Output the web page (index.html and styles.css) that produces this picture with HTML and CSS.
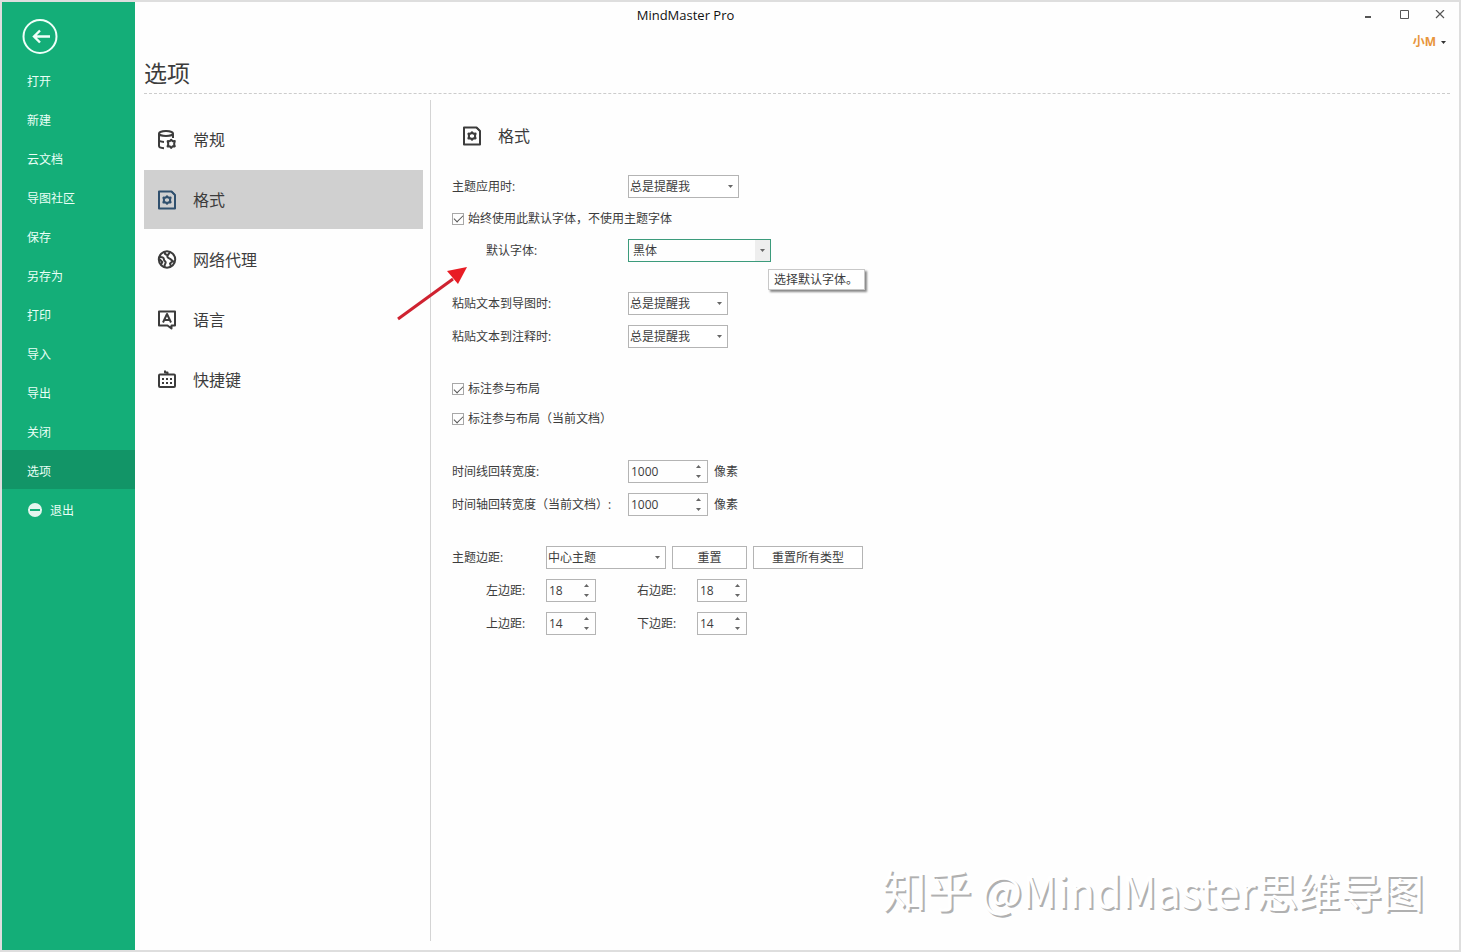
FILE: index.html
```html
<!DOCTYPE html>
<html lang="zh-CN">
<head>
<meta charset="utf-8">
<title>MindMaster Pro</title>
<link rel="stylesheet" href="styles.css">
</head>
<body>
<svg class="defs" aria-hidden="true">
  <symbol id="down" viewBox="0 0 5 3"><path d="M0 0h5L2.500 3z"/></symbol>
  <symbol id="up" viewBox="0 0 5 3"><path d="M0 3h5L2.500 0z"/></symbol>
  <symbol id="format" viewBox="0 0 20 20">
    <path d="M2 1.500h12.500L18 5v13.500H2z" fill="none" stroke="currentColor" stroke-width="2" stroke-linejoin="round"/>
    <path d="M13.500 1.500L18 6V4l-2.500-2.500z" fill="currentColor"/>
    <path d="M10 6.200l1.400 1.500 2.200-.1-.7 2.400.7 2.400-2.200-.1L10 13.800l-1.400-1.500-2.200.1.700-2.400-.7-2.400 2.200.1z" fill="none" stroke="currentColor" stroke-width="2" stroke-linejoin="round"/>
  </symbol>
</svg>
<div class="window">
  <aside class="sidebar">
    <button class="back" aria-label="返回">
      <svg viewBox="0 0 36 36" width="36" height="36"><circle cx="18" cy="17.500" r="16.500" fill="none" stroke="currentColor" stroke-width="2"/><path d="M28 17.500H12M18 11.500l-6 6 6 6" fill="none" stroke="currentColor" stroke-width="2.400"/></svg>
    </button>
    <nav class="menu">
      <a href="#">打开</a>
      <a href="#">新建</a>
      <a href="#">云文档</a>
      <a href="#">导图社区</a>
      <a href="#">保存</a>
      <a href="#">另存为</a>
      <a href="#">打印</a>
      <a href="#">导入</a>
      <a href="#">导出</a>
      <a href="#">关闭</a>
      <a href="#" class="current">选项</a>
      <a href="#"><svg viewBox="0 0 16 16" width="16" height="16"><circle cx="8" cy="7" r="7" fill="#e4f5ee"/><path d="M3 7h10" stroke="#14ae78" stroke-width="2"/></svg>退出</a>
    </nav>
  </aside>
  <main class="main">
    <header class="titlebar">
      <span class="app-title">MindMaster Pro</span>
      <div class="controls">
        <button aria-label="最小化"><svg viewBox="0 0 10 10" width="10" height="10"><path d="M2 7h6" stroke="#555" stroke-width="2"/></svg></button>
        <button aria-label="最大化"><svg viewBox="0 0 10 10" width="10" height="10"><path d="M1.500 .5h8v8h-8z" fill="none" stroke="#555"/></svg></button>
        <button aria-label="关闭"><svg viewBox="0 0 10 10" width="10" height="10"><path d="M1 0l8 8M9 0L1 8" stroke="#555" stroke-width="1.200"/></svg></button>
      </div>
    </header>
    <div class="account"><button>小M<svg class="tri" aria-hidden="true"><use href="#down"/></svg></button></div>
    <h1>选项</h1>
    <div class="content">
      <nav class="tabs">
        <a href="#"><svg viewBox="0 0 20 20"><g fill="none" stroke="currentColor" stroke-width="2"><ellipse cx="9" cy="3.500" rx="7" ry="2.500"/><path d="M2 3.500V16c0 1.300 2 2 5 2.200M16 3.500V8M2 10c0 1.200 2 1.700 5 1.900"/><path d="M14.200 9.700l1.300 1.500 2.300-.1-.7 2.900.7 2.400-2.300-.1-1.300 1.700-1.300-1.700-2.300.1.700-2.400-.7-2.900 2.300.1z" stroke-linejoin="round"/></g></svg>常规</a>
        <a href="#" class="current"><svg><use href="#format"/></svg>格式</a>
        <a href="#"><svg viewBox="0 0 20 20"><g fill="none" stroke="currentColor" stroke-width="2" stroke-linejoin="round"><circle cx="10" cy="9.500" r="8.200"/><path d="M7.500 1.700c0 2.300 1.500 3.300 3.500 3.300L13 2M11 5c-1.500 1.500 0 3 1.700 3.700 1.500.6 2.600 2.800 4.800 3.300M2.300 7c2.500-.5 4.700.7 4.700 2.700 0 1.300 1.700 1.300 1.700 2.800 0 1.300-1.400 1.800-1.200 4.500M4 14.500L5.300 12l-3-3M14 16.500l-1-3 2.500-2.300"/></g></svg>网络代理</a>
        <a href="#"><svg viewBox="0 0 20 20"><g fill="none" stroke="currentColor" stroke-width="2" stroke-linejoin="round"><path d="M2 1.500h16v14h-3.500v3l-4-3H2z"/><path d="M6 12.500l4-8.500 4 8.500M7.500 10h5"/></g></svg>语言</a>
        <a href="#"><svg viewBox="0 0 20 20"><g fill="none" stroke="currentColor" stroke-width="2" stroke-linejoin="round"><rect x="2" y="4.500" width="16" height="12.500" rx="1"/><path d="M10.500 4.500V2.500H8V.5"/><path d="M5 9h10.500M5 13h10.500" stroke-dasharray="2 2"/></g></svg>快捷键</a>
      </nav>
      <section class="panel">
        <h2><svg><use href="#format"/></svg>格式</h2>
        <form class="form">
          <div class="group">
            <div class="row"><label class="name" for="theme">主题应用时:</label><span class="select w-111"><select id="theme"><option>总是提醒我</option></select><svg class="tri"><use href="#down"/></svg></span></div>
            <div class="row check"><input type="checkbox" id="always" checked><label for="always">始终使用此默认字体，不使用主题字体</label></div>
            <div class="row"><label class="name indent" for="font">默认字体:</label><span class="select focus w-143"><select id="font"><option>黑体</option></select><svg class="tri"><use href="#down"/></svg></span></div>
          </div>
          <div class="group">
            <div class="row"><label class="name" for="paste-map">粘贴文本到导图时:</label><span class="select w-100"><select id="paste-map"><option>总是提醒我</option></select><svg class="tri"><use href="#down"/></svg></span></div>
            <div class="row"><label class="name" for="paste-note">粘贴文本到注释时:</label><span class="select w-100"><select id="paste-note"><option>总是提醒我</option></select><svg class="tri"><use href="#down"/></svg></span></div>
          </div>
          <div class="group checks">
            <div class="row check"><input type="checkbox" id="callout" checked><label for="callout">标注参与布局</label></div>
            <div class="row check"><input type="checkbox" id="callout-doc" checked><label for="callout-doc">标注参与布局（当前文档）</label></div>
          </div>
          <div class="group">
            <div class="row"><label class="name" for="line">时间线回转宽度:</label><span class="spin w-80"><input type="number" id="line" value="1000"><span class="steps"><button type="button" aria-label="增加"><svg class="tri"><use href="#up"/></svg></button><button type="button" aria-label="减少"><svg class="tri"><use href="#down"/></svg></button></span></span><span>像素</span></div>
            <div class="row"><label class="name" for="axis">时间轴回转宽度（当前文档）:</label><span class="spin w-80"><input type="number" id="axis" value="1000"><span class="steps"><button type="button" aria-label="增加"><svg class="tri"><use href="#up"/></svg></button><button type="button" aria-label="减少"><svg class="tri"><use href="#down"/></svg></button></span></span><span>像素</span></div>
          </div>
          <div class="group">
            <div class="row"><label class="name short" for="margin">主题边距:</label><span class="select w-120"><select id="margin"><option>中心主题</option></select><svg class="tri"><use href="#down"/></svg></span><button type="button" class="btn w-75">重置</button><button type="button" class="btn w-110">重置所有类型</button></div>
            <div class="row"><label class="name short indent" for="left">左边距:</label><span class="spin w-50"><input type="number" id="left" value="18"><span class="steps"><button type="button" aria-label="增加"><svg class="tri"><use href="#up"/></svg></button><button type="button" aria-label="减少"><svg class="tri"><use href="#down"/></svg></button></span></span><label class="second" for="right">右边距:</label><span class="spin w-50"><input type="number" id="right" value="18"><span class="steps"><button type="button" aria-label="增加"><svg class="tri"><use href="#up"/></svg></button><button type="button" aria-label="减少"><svg class="tri"><use href="#down"/></svg></button></span></span></div>
            <div class="row"><label class="name short indent" for="top">上边距:</label><span class="spin w-50"><input type="number" id="top" value="14"><span class="steps"><button type="button" aria-label="增加"><svg class="tri"><use href="#up"/></svg></button><button type="button" aria-label="减少"><svg class="tri"><use href="#down"/></svg></button></span></span><label class="second" for="bottom">下边距:</label><span class="spin w-50"><input type="number" id="bottom" value="14"><span class="steps"><button type="button" aria-label="增加"><svg class="tri"><use href="#up"/></svg></button><button type="button" aria-label="减少"><svg class="tri"><use href="#down"/></svg></button></span></span></div>
          </div>
        </form>
        <div class="tooltip" role="tooltip">选择默认字体。</div>
        <svg class="pointer" viewBox="0 0 70 54" aria-hidden="true"><path d="M1 52L56 12" stroke="#cf2230" stroke-width="3"/><path d="M70 0L50 4l11 13z" fill="#e81c24"/></svg>
      </section>
    </div>
  </main>
  <div class="watermark"><span class="site">知乎</span> <span class="handle">@MindMaster</span>思维导图</div>
</div>
</body>
</html>
```
FILE: styles.css
```css
* { box-sizing: border-box; }
body {
  margin: 0;
  color: #3c3c3c;
  font: 12px/18px "Open Sans", "Noto Sans CJK SC", sans-serif;
}
a { color: inherit; text-decoration: none; }
button, input, select { font: inherit; color: inherit; border: 0; padding: 0; margin: 0; background: none; }
.defs { display: none; }
.window {
  position: relative;
  display: grid;
  grid-template-columns: 133px 1fr;
  min-height: 100vh;
  border: 2px solid #dedede;
  background: #fefefe;
}

/* Sidebar */
.sidebar { background: #14ae78; color: #e9fff6; }
.back { display: block; margin: 17px 0 5px 20px; height: 36px; color: #effff9; }
.back svg { display: block; }
.menu { display: grid; grid-auto-rows: 39px; }
.menu a { display: flex; align-items: center; gap: 7px; padding: 4px 0 0 25px; }
.menu .current { background: #129567; }

/* Title area */
.main { display: flex; flex-direction: column; padding: 0 9px; }
.titlebar { display: flex; align-items: center; height: 26px; }
.app-title { flex: 1; text-align: center; color: #111; font-size: 13px; line-height: 20px; }
.controls { display: flex; justify-content: flex-end; gap: 26px; width: 223px; padding-right: 5px; }
.controls button, .controls svg { display: block; width: 10px; height: 10px; }
.account { display: flex; justify-content: flex-end; height: 28px; padding: 5px 4px 0 0; }
.account button { display: flex; align-items: center; gap: 5px; height: 18px; color: #e8953c; font-weight: 700; }
.account .tri { color: #333; }
h1 { margin: 0; height: 38px; border-bottom: 1px dashed #ccc; font-size: 23px; line-height: 34px; font-weight: 400; }
.content { display: grid; grid-template-columns: 287px 1fr; flex: 1; padding: 6px 0 9px; }

/* Option tabs */
.tabs { display: grid; grid-auto-rows: 59px; gap: 1px; padding: 10px 7px 0 0; align-content: start; border-right: 1px solid #d4d4d4; }
.tabs a, h2 { display: flex; align-items: center; gap: 16px; font-size: 16px; line-height: 24px; }
.tabs a { padding: 1px 0 0 13px; }
.tabs svg, h2 svg { width: 20px; height: 20px; }
.tabs .current { background: #d0d0d0; }
.tabs .current svg { color: #30506e; }

/* Settings form */
.panel { position: relative; padding: 24px 0 0 21px; }
h2 { margin: 0; padding-left: 10px; font-weight: 400; }
.form { display: grid; gap: 30px; padding-top: 27px; }
.group { display: grid; gap: 10px; }
.group:first-child { gap: 9px; }
.row { display: flex; align-items: center; gap: 6px; height: 23px; white-space: nowrap; }
.checks { gap: 8px; }
.checks .row { height: 22px; }
.name { width: 170px; }
.name.short { width: 88px; }
.indent { padding-left: 34px; }
.second { width: 54px; margin-left: 35px; }
.check { gap: 4px; }
.check input { appearance: none; display: grid; place-items: center; width: 12px; height: 12px; border: 1px solid #a8a8a8; }
.check input:checked::after { content: ""; width: 8px; height: 4px; border: solid #555; border-width: 0 0 1px 1px; transform: translateY(-1px) rotate(-45deg); }
.tri { display: block; width: 5px; height: 3px; fill: currentColor; }
.select { display: grid; align-items: center; height: 23px; border: 1px solid #b4b4b4; background: #fff; }
.select > * { grid-area: 1 / 1; }
.select select { appearance: none; width: 100%; height: 21px; padding-left: 1px; }
.select .tri { justify-self: end; margin-right: 5px; pointer-events: none; color: #666; }
.select.focus { border-color: #3c9b7c; background: linear-gradient(#eee, #eee) right / 15px 100% no-repeat; }
.select.focus select { padding-left: 4px; }
.spin { display: flex; height: 23px; border: 1px solid #b4b4b4; }
.spin input { appearance: textfield; flex: 1; min-width: 0; padding-left: 2px; outline: 0; }
.spin input::-webkit-inner-spin-button { appearance: none; }
.steps { display: grid; width: 17px; padding: 0 0 1px; color: #666; }
.steps button { display: grid; place-items: center; }
.btn { height: 23px; border: 1px solid #b4b4b4; background: #fff; }
.w-50 { width: 50px; }
.w-75 { width: 75px; }
.w-80 { width: 80px; }
.w-100 { width: 100px; }
.w-110 { width: 110px; }
.w-111 { width: 111px; }
.w-120 { width: 120px; }
.w-143 { width: 143px; }

/* Overlays */
.tooltip { position: absolute; left: 337px; top: 169px; padding: 1px 6px 0 5px; border: 1px solid #c8c8c8; background: #fff; box-shadow: 2px 2px 2px #888; }
.pointer { position: absolute; left: -34px; top: 167px; width: 70px; height: 54px; }
.watermark {
  position: absolute;
  right: 35px;
  bottom: 30px;
  color: #fff;
  font: 42px/60px "Noto Sans CJK SC", sans-serif;
  text-shadow: 2px 2px 0 #b0b0b0;
}
.site { font-size: 45px; }
.handle { font-size: 43px; }
```
